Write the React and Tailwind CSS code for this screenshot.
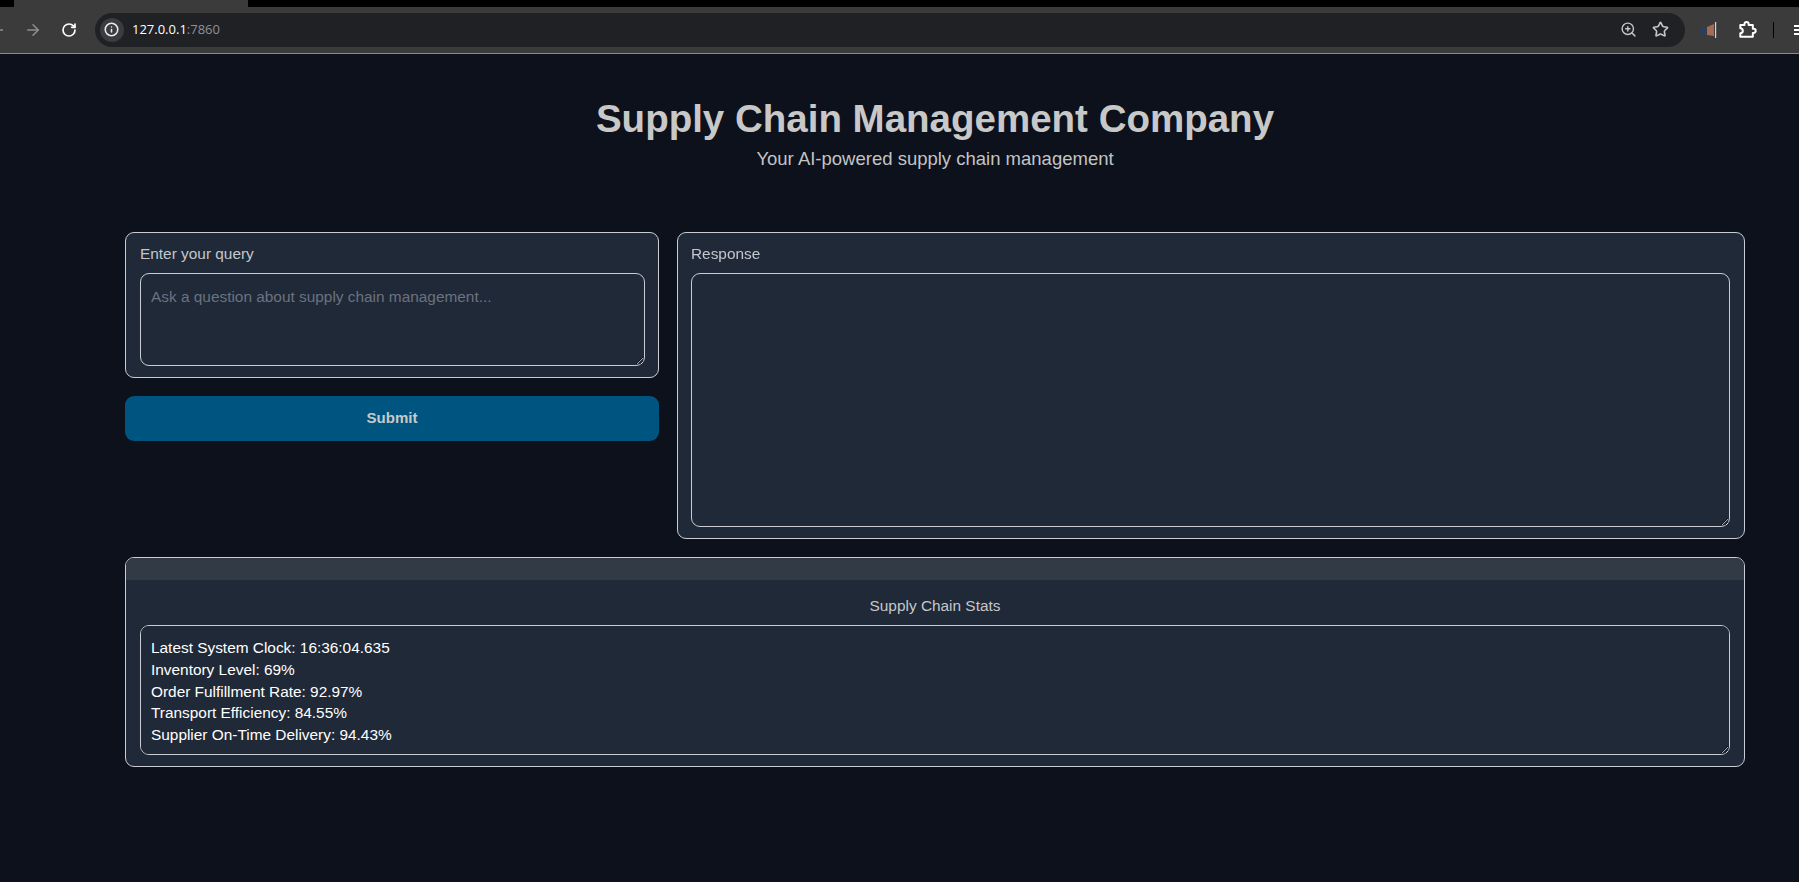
import React from 'react';
import { ArrowLeft, ArrowRight, RotateCw, Info, ZoomIn, Star } from 'lucide-react';

const stats = `Latest System Clock: 16:36:04.635
Inventory Level: 69%
Order Fulfillment Rate: 92.97%
Transport Efficiency: 84.55%
Supplier On-Time Delivery: 94.43%`;

const BrowserBar = () => (
  <div className="h-[54px] overflow-hidden bg-black">
    {/* Tab strip */}
    <div className="flex h-[7px]">
      <div className="w-[14px] rounded-br-lg bg-black" />
      <div className="w-[234px] bg-[#3b3b3b]" />
      <div className="flex-1 rounded-bl-lg bg-black" />
    </div>
    {/* Toolbar */}
    <div className="flex h-[47px] items-center border-b border-[#8a8a8a] bg-[#3b3b3b] pb-[1px] text-[#e8eaed]">
      <div className="w-[3px] overflow-hidden">
        <ArrowLeft size={18} strokeWidth={2} className="-ml-[11px] max-w-none text-[#8f8f8f]" />
      </div>
      <ArrowRight size={18} strokeWidth={2} className="ml-[21px] text-[#8f8f8f]" />
      <RotateCw size={16} strokeWidth={2.5} className="ml-[19px] text-white" />
      <div className="ml-[18px] flex h-[34px] w-[1591px] items-center rounded-full bg-[#202124] pl-[5px] pr-[16px]">
        <div className="flex h-[24px] w-[24px] items-center justify-center rounded-full bg-[#3b3c3f]">
          <Info size={15} strokeWidth={2.5} className="text-[#e8eaed]" />
        </div>
        <div className="ml-[8px] flex-1 font-['Open_Sans',sans-serif] text-[13px] text-white">
          127.0.0.1<span className="text-[#8e9298]">:7860</span>
        </div>
        <ZoomIn size={17} strokeWidth={2} className="text-[#c4c7c5]" />
        <Star size={17} strokeWidth={2.3} className="ml-[15px] text-[#c4c7c5]" />
      </div>
      <svg width="18" height="16" viewBox="0 0 18 16" className="ml-[14px]">
        <circle cx="4.5" cy="9" r="4" fill="#2b3f5c" />
        <path d="M8 5 L15 2 V14 L8 13z" fill="#a86a50" />
        <rect x="16" y="0" width="1.2" height="16" fill="#d5d5d5" />
      </svg>
      <svg width="20" height="20" viewBox="0 0 24 24" fill="none" stroke="#fff" strokeWidth="2.4" strokeLinejoin="round" className="ml-[20px]">
        <path d="M4 6h5V5a2.5 2.5 0 0 1 5 0v1h5v4.5h1a2.5 2.5 0 0 1 0 5h-1V20H4v-4a3 3 0 0 0 0-6z" />
      </svg>
      <div className="ml-[16px] h-[16px] w-[1px] bg-black" />
      <div className="ml-[20px] flex w-[5px] flex-col gap-[2px]">
        <div className="h-[2px] bg-white" />
        <div className="h-[2px] bg-white" />
        <div className="h-[2px] bg-white" />
      </div>
    </div>
  </div>
);

const fieldClass = "block w-full rounded-[9px] border border-[#c9cdd3] bg-[#1f2937] px-[10px] text-[15.4px] leading-[21.8px] outline-none";

export default function App() {
  return (
    <div className="h-[882px] overflow-hidden bg-[#0c111c] font-['Liberation_Sans',Arial,sans-serif] text-[#c9c9c9]">
      <BrowserBar />

      <div className="ml-[125px] mr-[54px]">
        {/* Page Header */}
        <div className="pt-[43px] text-center">
          <h1 className="text-[38.5px] leading-[44px] font-bold text-[#c8c8c8]">Supply Chain Management Company</h1>
          <p className="mt-[6px] text-[18.5px] leading-[24px] text-[#c4c4c4]">Your AI-powered supply chain management</p>
        </div>

        <div className="mt-[61px] grid grid-cols-[534px_1fr] gap-x-[18px]">
          {/* Query column */}
          <div>
            <div className="rounded-[9px] border border-[#c9cdd3] bg-[#1f2937] pl-[14px] pr-[13px] pt-[11px] pb-[11px]">
              <label className="block text-[15.4px] leading-[20px] text-[#c4c7cc]">Enter your query</label>
              <textarea
                className={`${fieldClass} mt-[9px] h-[93px] py-[12px] placeholder:text-[#6b7280]`}
                placeholder="Ask a question about supply chain management..."
              />
            </div>
            <button className="mt-[18px] h-[45px] w-full rounded-[9px] bg-[#005580] text-[15px] font-bold text-[#c9c9c9]">
              Submit
            </button>
          </div>

          {/* Response column */}
          <div className="rounded-[9px] border border-[#c9cdd3] bg-[#1f2937] pl-[13px] pr-[14px] pt-[11px] pb-[11px]">
            <label className="block text-[15.4px] leading-[20px] text-[#c4c7cc]">Response</label>
            <textarea className={`${fieldClass} mt-[9px] h-[254px] py-[8px]`} />
          </div>
        </div>

        {/* Stats */}
        <div className="mt-[18px] overflow-hidden rounded-[9px] border border-[#c9cdd3] bg-[#1f2937]">
          <div className="h-[22px] bg-[#323a46]" />
          <div className="px-[14px] pb-[11px]">
            <div className="pt-[16px] text-center text-[15.4px] leading-[20px] text-[#c4c7cc]">Supply Chain Stats</div>
            <textarea
              readOnly
              value={stats}
              className={`${fieldClass} mt-[9px] h-[130px] py-[11px] text-white`}
            />
          </div>
        </div>
      </div>
    </div>
  );
}
